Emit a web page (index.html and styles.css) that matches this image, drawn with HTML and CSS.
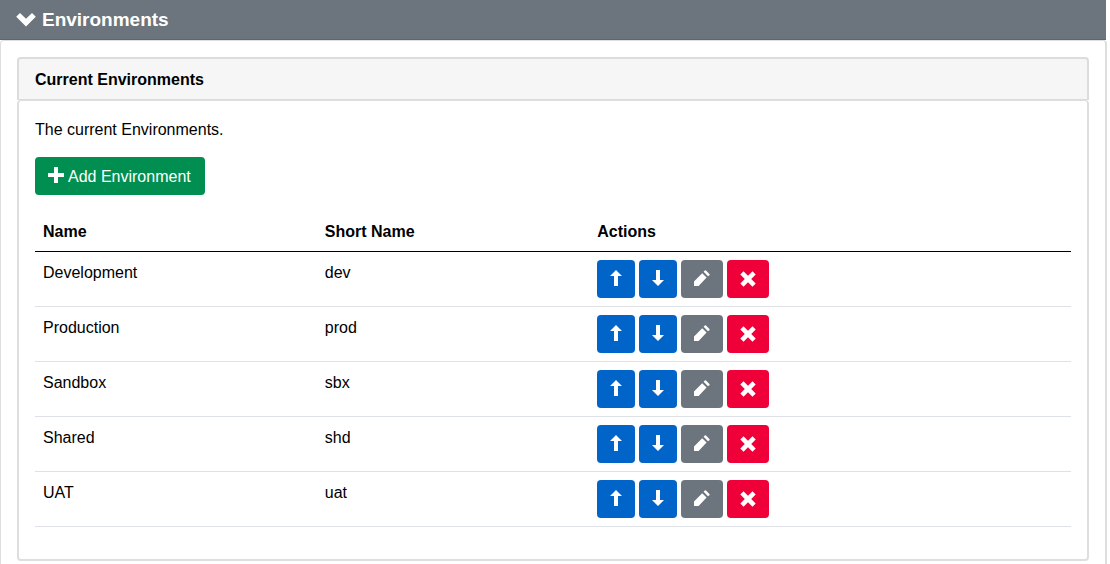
FILE: index.html
```html
<!DOCTYPE html>
<html lang="en">
<head>
<meta charset="utf-8">
<meta name="viewport" content="width=device-width, initial-scale=1">
<title>Environments</title>
<link rel="stylesheet" href="styles.css">
</head>
<body>
<svg class="sprite" aria-hidden="true">
  <symbol id="i-up" viewBox="0 0 12 16"><path d="M6 0L12 6H8V16H4V6H0Z"/></symbol>
  <symbol id="i-down" viewBox="0 0 12 16"><path d="M6 16L12 10H8V0H4V10H0Z"/></symbol>
  <symbol id="i-pencil" viewBox="0 0 16 16"><path d="M0 16V11.4L8.2 3.2L12.6 7.6L4.6 16ZM9.6 1.8L10.8.6Q11.4 0 12 .6L15.4 4Q16 4.6 15.4 5.2L14 6.2Z"/></symbol>
  <symbol id="i-remove" viewBox="0 0 16 16"><path d="M3.5.3L8 4.8L12.5.3L15.7 3.5L11.2 8L15.7 12.5L12.5 15.7L8 11.2L3.5 15.7L.3 12.5L4.8 8L.3 3.5Z"/></symbol>
</svg>
<section class="section">
  <h1 class="section-title">
    <svg class="chevron" viewBox="0 0 20 14" aria-hidden="true"><path d="M4 0L10 5.8L16 0L19.8 3.8L10 13.6L.2 3.8Z"/></svg>
    <span>Environments</span>
  </h1>
  <div class="section-body">
    <div class="card">
      <h2 class="card-title">Current Environments</h2>
      <div class="card-body">
        <p class="intro">The current Environments.</p>
        <button class="btn btn-add" type="button">
          <svg class="plus" viewBox="0 0 16 16" aria-hidden="true"><path d="M6 0H10V6H16V10H10V16H6V10H0V6H6Z"/></svg>
          <span class="btn-label">Add Environment</span>
        </button>
        <table class="table">
          <thead>
            <tr><th class="col-name" scope="col">Name</th><th class="col-short" scope="col">Short Name</th><th scope="col">Actions</th></tr>
          </thead>
          <tbody>
            <tr><td>Development</td><td>dev</td><td class="cell-actions"><div class="actions">
              <button class="btn btn-move" type="button" aria-label="Move up"><svg class="arrow"><use href="#i-up"/></svg></button>
              <button class="btn btn-move" type="button" aria-label="Move down"><svg class="arrow"><use href="#i-down"/></svg></button>
              <button class="btn btn-edit" type="button" aria-label="Edit"><svg class="glyph"><use href="#i-pencil"/></svg></button>
              <button class="btn btn-remove" type="button" aria-label="Delete"><svg class="glyph"><use href="#i-remove"/></svg></button>
            </div></td></tr>
            <tr><td>Production</td><td>prod</td><td class="cell-actions"><div class="actions">
              <button class="btn btn-move" type="button" aria-label="Move up"><svg class="arrow"><use href="#i-up"/></svg></button>
              <button class="btn btn-move" type="button" aria-label="Move down"><svg class="arrow"><use href="#i-down"/></svg></button>
              <button class="btn btn-edit" type="button" aria-label="Edit"><svg class="glyph"><use href="#i-pencil"/></svg></button>
              <button class="btn btn-remove" type="button" aria-label="Delete"><svg class="glyph"><use href="#i-remove"/></svg></button>
            </div></td></tr>
            <tr><td>Sandbox</td><td>sbx</td><td class="cell-actions"><div class="actions">
              <button class="btn btn-move" type="button" aria-label="Move up"><svg class="arrow"><use href="#i-up"/></svg></button>
              <button class="btn btn-move" type="button" aria-label="Move down"><svg class="arrow"><use href="#i-down"/></svg></button>
              <button class="btn btn-edit" type="button" aria-label="Edit"><svg class="glyph"><use href="#i-pencil"/></svg></button>
              <button class="btn btn-remove" type="button" aria-label="Delete"><svg class="glyph"><use href="#i-remove"/></svg></button>
            </div></td></tr>
            <tr><td>Shared</td><td>shd</td><td class="cell-actions"><div class="actions">
              <button class="btn btn-move" type="button" aria-label="Move up"><svg class="arrow"><use href="#i-up"/></svg></button>
              <button class="btn btn-move" type="button" aria-label="Move down"><svg class="arrow"><use href="#i-down"/></svg></button>
              <button class="btn btn-edit" type="button" aria-label="Edit"><svg class="glyph"><use href="#i-pencil"/></svg></button>
              <button class="btn btn-remove" type="button" aria-label="Delete"><svg class="glyph"><use href="#i-remove"/></svg></button>
            </div></td></tr>
            <tr><td>UAT</td><td>uat</td><td class="cell-actions"><div class="actions">
              <button class="btn btn-move" type="button" aria-label="Move up"><svg class="arrow"><use href="#i-up"/></svg></button>
              <button class="btn btn-move" type="button" aria-label="Move down"><svg class="arrow"><use href="#i-down"/></svg></button>
              <button class="btn btn-edit" type="button" aria-label="Edit"><svg class="glyph"><use href="#i-pencil"/></svg></button>
              <button class="btn btn-remove" type="button" aria-label="Delete"><svg class="glyph"><use href="#i-remove"/></svg></button>
            </div></td></tr>
          </tbody>
        </table>
      </div>
    </div>
  </div>
</section>
</body>
</html>
```
FILE: styles.css
```css
* {
  box-sizing: border-box;
}

body {
  margin: 0;
  background: #fff;
  color: #000;
  font: 16px/24px "Liberation Sans", Arial, sans-serif;
}

svg {
  display: block;
  flex: none;
  fill: currentColor;
}

.sprite {
  display: none;
}

.section {
  display: flex;
  flex-direction: column;
  min-height: 100vh;
  margin-right: 3px;
}

.section-title {
  display: flex;
  align-items: center;
  gap: 6px;
  height: 40px;
  margin: 0 1px 0 0;
  padding: 0 16px;
  border-bottom: 1px solid #5d666e;
  background: #6c757d;
  color: #fff;
  font-size: 19px;
  line-height: 24px;
}

.chevron {
  width: 20px;
  height: 14px;
}

.section-body {
  flex: 1;
  padding: 16px 16px 0;
  border: 1px solid #dedede;
  border-right-width: 2px;
  border-bottom: 0;
  border-radius: 4px 4px 0 0;
}

.card-title {
  margin: 0;
  padding: 9px 16px 7px;
  border: 2px solid #dcdcdc;
  border-bottom-width: 1px;
  border-radius: 4px 4px 0 0;
  background: #f6f6f6;
  font-size: 16px;
  line-height: 24px;
}

.card-body {
  padding: 17px 16px 32px;
  border: 2px solid #dedede;
  border-top-width: 1px;
  border-radius: 4px;
}

.intro {
  margin: 0 0 15px;
}

.btn {
  display: inline-flex;
  align-items: center;
  justify-content: center;
  height: 38px;
  padding: 0 0 2px;
  border: 0;
  border-radius: 4px;
  color: #fff;
  font: inherit;
  cursor: pointer;
}

.btn-add {
  gap: 4px;
  padding: 0 14px 2px 13px;
  background: #008f51;
}

.btn-label {
  padding-top: 4px;
}

.plus {
  width: 16px;
  height: 16px;
}

.table {
  width: 100%;
  margin-top: 16px;
  border-collapse: separate;
  border-spacing: 0;
  table-layout: fixed;
}

.table th,
.table td {
  padding: 9px 8px 7px;
  border-bottom: 1px solid #dee2e6;
  text-align: left;
  vertical-align: top;
}

.table th {
  border-bottom-color: #000;
}

.table .cell-actions {
  padding: 8px;
}

.col-name {
  width: 27.2%;
}

.col-short {
  width: 26.3%;
}

.actions {
  display: flex;
  gap: 4px;
}

.btn-move {
  width: 38px;
  background: #0064c8;
}

.btn-edit {
  width: 42px;
  background: #6c757d;
}

.btn-remove {
  width: 42px;
  padding: 0;
  background: #ef0038;
}

.arrow {
  width: 12px;
  height: 16px;
}

.glyph {
  width: 16px;
  height: 16px;
}
```
